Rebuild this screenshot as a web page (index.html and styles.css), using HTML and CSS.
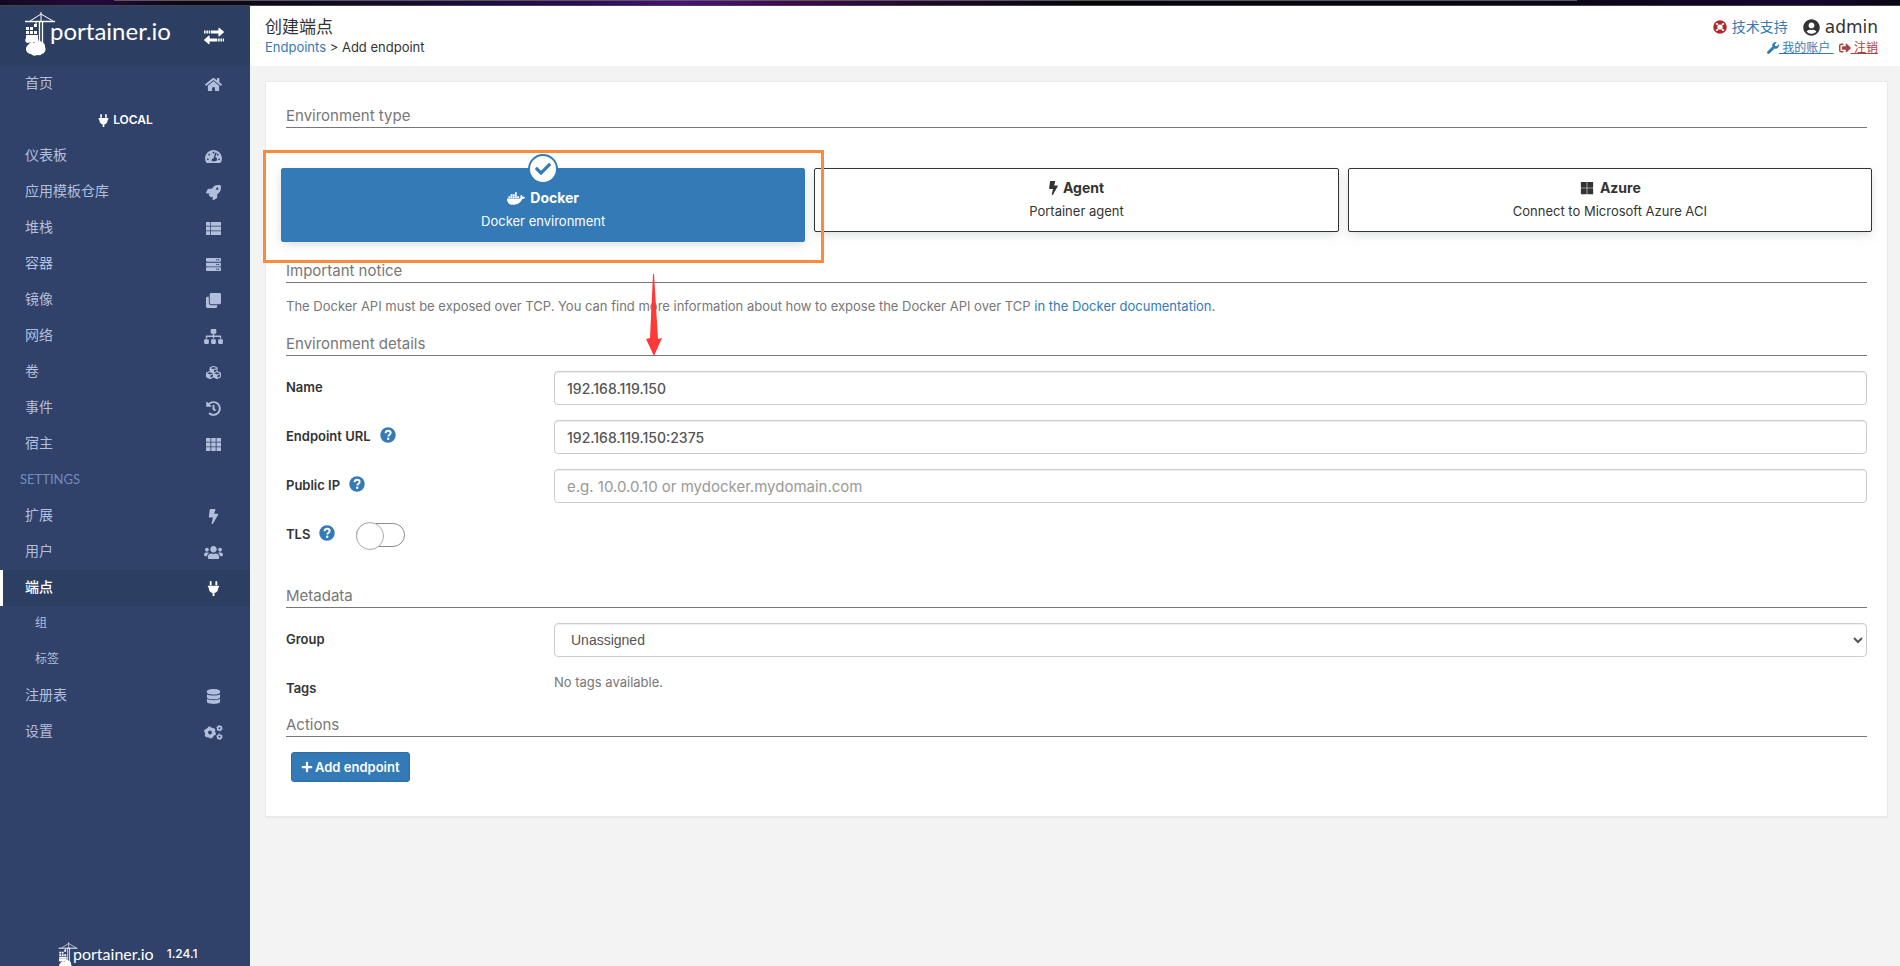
FILE: index.html
```html
<!DOCTYPE html>
<html lang="zh-CN">
<head>
<meta charset="utf-8">
<title>Portainer</title>
<link rel="stylesheet" href="styles.css">
</head>
<body>
<svg class="defs" aria-hidden="true">
  <symbol id="i-exchange" viewBox="0 0 512 512"><path d="M0 118h40v72H0zM60 118h40v72H60zM120 118h40v72h-40zM180 118h188V64c0-16 16-24 28-13l108 92c10 9 10 17 0 26l-108 92c-12 11-28 3-28-13v-58H180zM512 322h-30v72h30zM462 322h-40v72h40zM402 322h-40v72h40zM342 322H144v-58c0-16-16-24-28-13L8 343c-10 9-10 17 0 26l108 92c12 11 28 3 28-13v-54h198z"/></symbol>
  <symbol id="i-home" viewBox="0 0 576 512"><path d="M280.37 148.26L96 300.11V464a16 16 0 0 0 16 16l112.06-.29a16 16 0 0 0 15.92-16V368a16 16 0 0 1 16-16h64a16 16 0 0 1 16 16v95.64a16 16 0 0 0 16 16.05L464 480a16 16 0 0 0 16-16V300L295.67 148.26a12.19 12.19 0 0 0-15.3 0zM571.6 251.47L488 182.56V44.05a12 12 0 0 0-12-12h-56a12 12 0 0 0-12 12v72.61L318.47 43a48 48 0 0 0-61 0L4.34 251.47a12 12 0 0 0-1.6 16.9l25.5 31A12 12 0 0 0 45.15 301l235.22-193.74a12.19 12.19 0 0 1 15.3 0L530.9 301a12 12 0 0 0 16.9-1.6l25.5-31a12 12 0 0 0-1.7-16.93z"/></symbol>
  <symbol id="i-plug" viewBox="0 0 384 512"><path d="M256 144V32c0-17.673 14.327-32 32-32s32 14.327 32 32v112h-64zm112 16H16c-8.837 0-16 7.163-16 16v32c0 8.837 7.163 16 16 16h16v32c0 77.406 54.969 141.971 128 156.796V512h64v-99.204c73.031-14.825 128-79.39 128-156.796v-32h16c8.837 0 16-7.163 16-16v-32c0-8.837-7.163-16-16-16zm-240-16V32c0-17.673-14.327-32-32-32S64 14.327 64 32v112h64z"/></symbol>
  <symbol id="i-dash" viewBox="0 0 576 512"><path fill-rule="evenodd" d="M288 32C128.94 32 0 160.94 0 320c0 52.8 14.25 102.26 39.06 144.8 5.61 9.62 16.3 15.2 27.44 15.2h443c11.14 0 21.83-5.58 27.44-15.2C561.75 422.26 576 372.8 576 320c0-159.06-128.94-288-288-288zm0 64c17.67 0 32 14.33 32 32s-14.33 32-32 32-32-14.33-32-32 14.33-32 32-32zM96 384c-17.67 0-32-14.33-32-32s14.33-32 32-32 32 14.33 32 32-14.33 32-32 32zm48-160c-17.67 0-32-14.33-32-32s14.33-32 32-32 32 14.33 32 32-14.33 32-32 32zm202.77 61.33A63.84 63.84 0 0 1 343.44 416h-110.88A63.98 63.98 0 0 1 284.6 320l61.33-184a24 24 0 0 1 45.54 15.18zM432 160c17.67 0 32 14.33 32 32s-14.33 32-32 32-32-14.33-32-32 14.33-32 32-32zm48 224c-17.67 0-32-14.33-32-32s14.33-32 32-32 32 14.33 32 32-14.33 32-32 32z"/></symbol>
  <symbol id="i-rocket" viewBox="0 0 512 512"><path fill-rule="evenodd" d="M505.12 19.09c-1.19-5.53-6.66-11-12.21-12.18C460.7 0 435.5 0 410.4 0 307.2 0 245.3 55.2 199 128H94.9c-16.34 0-35.56 11.88-42.88 26.49L2.57 253.29A28.13 28.13 0 0 0 0 264a24 24 0 0 0 24 24h103.8l-22.47 22.47a32 32 0 0 0 0 45.25l50.9 50.91a32 32 0 0 0 45.26 0L224 384.16V488a24 24 0 0 0 24 24 28 28 0 0 0 10.7-2.55l98.72-49.39c14.63-7.3 26.5-26.5 26.5-42.86V312.8c72.59-46.3 128-108.4 128-211.1.1-25.2.1-50.4-6.8-82.61zM384 168a40 40 0 1 1 40-40 40 40 0 0 1-40 40z"/></symbol>
  <symbol id="i-list" viewBox="0 0 512 512"><path d="M0 32h145v132H0zM170 32h342v132H170zM0 190h145v132H0zM170 190h342v132H170zM0 348h145v132H0zM170 348h342v132H170z"/></symbol>
  <symbol id="i-server" viewBox="0 0 512 512"><path fill-rule="evenodd" d="M480 160H32c-17.67 0-32-14.33-32-32V64c0-17.67 14.33-32 32-32h448c17.67 0 32 14.33 32 32v64c0 17.67-14.33 32-32 32zm-48-88a24 24 0 1 0 0 48 24 24 0 0 0 0-48zm-64 0a24 24 0 1 0 0 48 24 24 0 0 0 0-48zm112 248H32c-17.67 0-32-14.33-32-32v-64c0-17.67 14.33-32 32-32h448c17.67 0 32 14.33 32 32v64c0 17.67-14.33 32-32 32zm-48-88a24 24 0 1 0 0 48 24 24 0 0 0 0-48zm-64 0a24 24 0 1 0 0 48 24 24 0 0 0 0-48zm112 248H32c-17.67 0-32-14.33-32-32v-64c0-17.67 14.33-32 32-32h448c17.67 0 32 14.33 32 32v64c0 17.67-14.33 32-32 32zm-48-88a24 24 0 1 0 0 48 24 24 0 0 0 0-48zm-64 0a24 24 0 1 0 0 48 24 24 0 0 0 0-48z"/></symbol>
  <symbol id="i-clone" viewBox="0 0 512 512"><path d="M464 0c26.51 0 48 21.49 48 48v288c0 26.51-21.49 48-48 48H176c-26.51 0-48-21.49-48-48V48c0-26.51 21.49-48 48-48h288M176 416c-44.112 0-80-35.888-80-80V128H48c-26.51 0-48 21.49-48 48v288c0 26.51 21.49 48 48 48h288c26.51 0 48-21.49 48-48v-48H176z"/></symbol>
  <symbol id="i-sitemap" viewBox="0 0 640 512"><path d="M128 352H32c-17.67 0-32 14.33-32 32v96c0 17.67 14.33 32 32 32h96c17.67 0 32-14.33 32-32v-96c0-17.67-14.33-32-32-32zm-24-80h192v48h48v-48h192v48h48v-57.59c0-21.17-17.23-38.41-38.41-38.41H344v-64h40c17.67 0 32-14.33 32-32V32c0-17.67-14.33-32-32-32H256c-17.67 0-32 14.33-32 32v96c0 17.67 14.33 32 32 32h40v64H94.41C73.23 224 56 241.23 56 262.41V320h48v-48zm264 80h-96c-17.67 0-32 14.33-32 32v96c0 17.67 14.33 32 32 32h96c17.67 0 32-14.33 32-32v-96c0-17.67-14.33-32-32-32zm240 0h-96c-17.67 0-32 14.33-32 32v96c0 17.67 14.33 32 32 32h96c17.67 0 32-14.33 32-32v-96c0-17.67-14.33-32-32-32z"/></symbol>
  <symbol id="i-cubes" viewBox="0 0 512 512"><path fill-rule="evenodd" d="M488.6 250.2L392 214V105.500c0-15-9.300-28.400-23.400-33.700l-100-37.500c-8.100-3.100-17.100-3.100-25.300 0l-100 37.500c-14.100 5.300-23.400 18.700-23.400 33.700V214l-96.600 36.200C9.300 255.500 0 268.900 0 283.900V394c0 13.600 7.700 26.100 19.900 32.200l100 50c10.100 5.100 22.100 5.100 32.200 0l103.900-52 103.900 52c10.100 5.100 22.100 5.100 32.200 0l100-50c12.200-6.100 19.900-18.600 19.900-32.200V283.900c0-15-9.300-28.400-23.400-33.700zM358 214.800l-85 31.900v-68.200l85-37v73.300zM154 104.100l102-38.200 102 38.200v.6l-102 41.400-102-41.400v-.6zm84 291.100l-85 42.500v-79.100l85-38.800v75.400zm0-112l-102 41.400-102-41.400v-.6l102-38.200 102 38.200v.6zm240 112l-85 42.500v-79.100l85-38.800v75.400zm0-112l-102 41.400-102-41.400v-.6l102-38.200 102 38.200v.6z"/></symbol>
  <symbol id="i-history" viewBox="0 0 512 512"><path d="M504 255.531c.253 136.640-111.180 248.372-247.820 248.468-59.015.042-113.223-20.530-155.822-54.911-11.077-8.940-11.905-25.541-1.839-35.607l11.267-11.267c8.609-8.609 22.353-9.551 31.891-1.984C173.062 425.135 212.781 440 256 440c101.705 0 184-82.311 184-184 0-101.705-82.311-184-184-184-48.814 0-93.149 18.969-126.068 49.932l50.754 50.754c10.080 10.080 2.941 27.314-11.313 27.314H24c-8.837 0-16-7.163-16-16V38.627c0-14.254 17.234-21.393 27.314-11.314l49.372 49.372C129.209 34.136 189.552 8 256 8c136.810 0 247.747 110.780 248 247.531zm-180.912 78.784l9.823-12.630c8.138-10.463 6.253-25.542-4.210-33.679L288 256.349V152c0-13.255-10.745-24-24-24h-16c-13.255 0-24 10.745-24 24v135.651l65.409 50.874c10.463 8.137 25.541 6.253 33.679-4.210z"/></symbol>
  <symbol id="i-th" viewBox="0 0 512 512"><path d="M0 32h152v134H0zM180 32h152v134H180zM360 32h152v134H360zM0 190h152v134H0zM180 190h152v134H180zM360 190h152v134H360zM0 348h152v132H0zM180 348h152v132H180zM360 348h152v132H360z"/></symbol>
  <symbol id="i-bolt" viewBox="0 0 320 512"><path d="M296 160H180.600l42.600-129.800C227.200 15 215.700 0 200 0H56C44 0 33.800 8.900 32.200 20.800l-32 240C-1.700 275.200 9.500 288 24 288h118.700L96.600 482.500c-3.600 15.200 8 29.500 23.300 29.500 8.400 0 16.400-4.400 20.800-12l176-304c9.300-15.900-2.200-36-20.700-36z"/></symbol>
  <symbol id="i-users" viewBox="0 0 640 512"><path d="M96 224c35.300 0 64-28.700 64-64s-28.700-64-64-64-64 28.700-64 64 28.700 64 64 64zm448 0c35.300 0 64-28.700 64-64s-28.700-64-64-64-64 28.700-64 64 28.700 64 64 64zm32 32h-64c-17.600 0-33.500 7.100-45.100 18.600 40.300 22.100 68.900 62 75.100 109.400h66c17.700 0 32-14.300 32-32v-32c0-35.300-28.700-64-64-64zm-256 0c61.900 0 112-50.100 112-112S381.900 32 320 32 208 82.100 208 144s50.100 112 112 112zm76.800 32h-8.300c-20.800 10-43.900 16-68.500 16s-47.600-6-68.500-16h-8.300C179.600 288 128 339.600 128 403.200V432c0 26.500 21.500 48 48 48h288c26.500 0 48-21.500 48-48v-28.800c0-63.600-51.600-115.200-115.200-115.200zm-223.700-13.400C161.500 263.100 145.600 256 128 256H64c-35.300 0-64 28.700-64 64v32c0 17.700 14.300 32 32 32h65.900c6.300-47.400 34.900-87.300 75.200-109.400z"/></symbol>
  <symbol id="i-db" viewBox="0 0 448 512"><path d="M448 73.143v45.714C448 159.143 347.667 192 224 192S0 159.143 0 118.857V73.143C0 32.857 100.333 0 224 0s224 32.857 224 73.143zM448 176v102.857C448 319.143 347.667 352 224 352S0 319.143 0 278.857V176c48.125 33.143 136.208 48.572 224 48.572S399.874 209.143 448 176zm0 160v102.857C448 479.143 347.667 512 224 512S0 479.143 0 438.857V336c48.125 33.143 136.208 48.572 224 48.572S399.874 369.143 448 336z"/></symbol>
  <symbol id="i-cogs" viewBox="0 0 640 512"><g fill="none" stroke="currentColor"><circle cx="200" cy="256" r="122" stroke-width="110"/><circle cx="200" cy="256" r="180" stroke-width="50" stroke-dasharray="94 94.500"/><circle cx="525" cy="110" r="62" stroke-width="54"/><circle cx="525" cy="110" r="94" stroke-width="30" stroke-dasharray="49 49.400"/><circle cx="525" cy="402" r="62" stroke-width="54"/><circle cx="525" cy="402" r="94" stroke-width="30" stroke-dasharray="49 49.400"/></g></symbol>
  <symbol id="i-ring" viewBox="0 0 512 512"><circle cx="256" cy="256" r="172" fill="none" stroke="currentColor" stroke-width="152"/><g fill="none" stroke="#fff"><path d="M120 120L180 180M332 180l60-60M120 392l60-60M332 332l60 60" stroke-width="66"/></g></symbol>
  <symbol id="i-user" viewBox="0 0 496 512"><path d="M248 8C111 8 0 119 0 256s111 248 248 248 248-111 248-248S385 8 248 8zm0 96c48.600 0 88 39.400 88 88s-39.400 88-88 88-88-39.400-88-88 39.400-88 88-88zm0 344c-58.700 0-111.300-26.600-146.500-68.200 18.800-35.400 55.600-59.800 98.500-59.800 2.400 0 4.800.4 7.100 1.100 13 4.200 26.600 6.900 40.900 6.900 14.300 0 28-2.700 40.900-6.900 2.300-.7 4.700-1.100 7.100-1.100 42.900 0 79.700 24.400 98.500 59.800C359.300 421.400 306.700 448 248 448z"/></symbol>
  <symbol id="i-wrench" viewBox="0 0 512 512"><path d="M507.730 109.100c-2.240-9.030-13.540-12.090-20.120-5.510l-74.360 74.360-67.880-11.310-11.310-67.880 74.360-74.360c6.620-6.620 3.430-17.900-5.660-20.160-47.380-11.740-99.550.91-136.580 37.930-39.640 39.640-50.550 97.100-34.050 147.200L18.740 402.760c-24.990 24.990-24.990 65.510 0 90.500 24.990 24.990 65.510 24.990 90.500 0l213.210-213.210c50.120 16.710 107.470 5.680 147.370-34.220 37.070-37.070 49.700-89.320 37.910-136.730z"/></symbol>
  <symbol id="i-out" viewBox="0 0 512 512"><path d="M497 273L329 441c-15 15-41 4.500-41-17v-96H152c-13.300 0-24-10.700-24-24v-96c0-13.300 10.700-24 24-24h136V88c0-21.400 25.900-32 41-17l168 168c9.300 9.400 9.300 24.600 0 34zM192 436v-40c0-6.600-5.400-12-12-12H96c-17.700 0-32-14.300-32-32V160c0-17.700 14.300-32 32-32h84c6.600 0 12-5.400 12-12V76c0-6.600-5.400-12-12-12H96c-53 0-96 43-96 96v192c0 53 43 96 96 96h84c6.600 0 12-5.400 12-12z"/></symbol>
  <symbol id="i-help" viewBox="0 0 512 512"><circle cx="256" cy="256" r="248"/><path d="M176 200c6-55 38-80 82-80 48 0 82 28 82 68 0 58-74 56-74 112" fill="none" stroke="#fff" stroke-width="62"/><circle cx="262" cy="376" r="40" fill="#fff"/></symbol>
  <symbol id="i-check" viewBox="0 0 512 512"><path d="M173.898 439.404l-166.400-166.400c-9.997-9.997-9.997-26.206 0-36.204l36.203-36.204c9.997-9.998 26.207-9.998 36.204 0L192 312.690 432.095 72.596c9.997-9.997 26.207-9.997 36.204 0l36.203 36.204c9.997 9.997 9.997 26.206 0 36.204l-294.400 294.401c-9.998 9.997-26.207 9.997-36.204-.001z"/></symbol>
  <symbol id="i-docker" viewBox="0 0 640 512"><path d="M349.900 236.300h-66.100v-59.400h66.100v59.400zm0-204.300h-66.100v60.700h66.100V32zm78.200 144.800H362v59.400h66.100v-59.400zm-156.300-72.100h-66.100v60.100h66.100v-60.100zm78.100 0h-66.100v60.100h66.100v-60.100zm276.800 100c-14.400-9.700-47.600-13.200-73.100-8.400-3.300-24-16.700-44.900-41.100-63.700l-14-9.300-9.300 14c-18.400 27.800-23.400 73.600-3.700 103.800-8.700 4.700-25.800 11.100-48.400 10.700H2.400c-8.700 50.800 5.800 116.800 44 162.100 37.100 43.900 92.700 66.200 165.400 66.200 157.400 0 273.900-72.500 328.400-204.200 21.400.4 67.600.1 91.300-45.200 1.500-2.500 6.600-13.200 8.500-17.100l-13.300-8.900zm-511.100-27.900h-66v59.400h66.100v-59.400zm78.100 0h-66.100v59.400h66.100v-59.400zm78.100 0h-66.100v59.400h66.100v-59.400zm-78.100-72.100h-66.100v60.100h66.100v-60.100z"/></symbol>
  <symbol id="i-win" viewBox="0 0 448 512"><path d="M0 32h214v214H0zM234 32h214v214H234zM0 266h214v214H0zM234 266h214v214H234z"/></symbol>
  <symbol id="i-plus" viewBox="0 0 448 512"><path d="M416 208H272V64c0-17.670-14.330-32-32-32h-32c-17.670 0-32 14.330-32 32v144H32c-17.670 0-32 14.330-32 32v32c0 17.670 14.330 32 32 32h144v144c0 17.670 14.330 32 32 32h32c17.670 0 32-14.330 32-32V304h144c17.670 0 32-14.330 32-32v-32c0-17.670-14.330-32-32-32z"/></symbol>
  <symbol id="i-crane" viewBox="0 0 32 44"><g fill="none" stroke="currentColor"><path d="M1 9.500h30" stroke-width="1.500"/><path d="M6 9L17 2l12 7M17 0v10M12 10v4" stroke-width="1"/><path d="M15.500 9v22M18.500 9v22" stroke-width="1.300"/></g><path d="M10 12h3v3h-3zM2 15h3v3H2zM6 15h3v3H6zM2 19h3v3H2zM6 19h3v3H6zM10 19h3v3h-3zM2 23h12v3H2z"/><path d="M3 31q-3-2-1-5h12v4q-4-1-5 1-4-1-6 0z"/><path d="M7 42a5 5 0 0 1-3-9 5 5 0 0 1 6-2 5 5 0 0 1 8-1 5 5 0 0 1 3 5 5 5 0 0 1-3 7 5 5 0 0 1-5 1 5 5 0 0 1-6-1z"/></symbol>
</svg>

<div class="strip"></div>
<div class="app">
  <nav class="sidebar">
    <header class="brand">
      <a class="logo" href="#"><svg class="crane"><use href="#i-crane"/></svg><span>portainer.io</span></a>
      <button class="toggle" aria-label="Toggle sidebar"><svg class="ic"><use href="#i-exchange"/></svg></button>
    </header>
    <ul class="menu">
      <li><a href="#"><span>首页</span><svg class="ic"><use href="#i-home"/></svg></a></li>
      <li class="env"><svg class="ic small"><use href="#i-plug"/></svg>LOCAL</li>
      <li><a href="#"><span>仪表板</span><svg class="ic"><use href="#i-dash"/></svg></a></li>
      <li><a href="#"><span>应用模板仓库</span><svg class="ic"><use href="#i-rocket"/></svg></a></li>
      <li><a href="#"><span>堆栈</span><svg class="ic"><use href="#i-list"/></svg></a></li>
      <li><a href="#"><span>容器</span><svg class="ic"><use href="#i-server"/></svg></a></li>
      <li><a href="#"><span>镜像</span><svg class="ic"><use href="#i-clone"/></svg></a></li>
      <li><a href="#"><span>网络</span><svg class="ic"><use href="#i-sitemap"/></svg></a></li>
      <li><a href="#"><span>卷</span><svg class="ic"><use href="#i-cubes"/></svg></a></li>
      <li><a href="#"><span>事件</span><svg class="ic"><use href="#i-history"/></svg></a></li>
      <li><a href="#"><span>宿主</span><svg class="ic"><use href="#i-th"/></svg></a></li>
      <li class="heading">SETTINGS</li>
      <li><a href="#"><span>扩展</span><svg class="ic"><use href="#i-bolt"/></svg></a></li>
      <li><a href="#"><span>用户</span><svg class="ic"><use href="#i-users"/></svg></a></li>
      <li><a class="active" href="#"><span>端点</span><svg class="ic"><use href="#i-plug"/></svg></a></li>
      <li><a class="sub" href="#"><span>组</span></a></li>
      <li><a class="sub" href="#"><span>标签</span></a></li>
      <li><a href="#"><span>注册表</span><svg class="ic"><use href="#i-db"/></svg></a></li>
      <li><a href="#"><span>设置</span><svg class="ic"><use href="#i-cogs"/></svg></a></li>
    </ul>
    <footer class="foot"><span class="logo mini"><svg class="crane"><use href="#i-crane"/></svg><span>portainer.io</span></span><span class="version">1.24.1</span></footer>
  </nav>

  <div class="page">
    <header class="topbar">
      <div>
        <h1>创建端点</h1>
        <p class="crumbs"><a href="#">Endpoints</a> &gt; Add endpoint</p>
      </div>
      <div class="account">
        <div class="who"><a class="support" href="#"><svg class="ic"><use href="#i-ring"/></svg>技术支持</a><span class="user"><svg class="ic"><use href="#i-user"/></svg>admin</span></div>
        <div class="links"><a href="#"><svg class="ic"><use href="#i-wrench"/></svg><u>&nbsp;我的账户&nbsp;</u></a><a class="logout" href="#"><svg class="ic"><use href="#i-out"/></svg><u>&nbsp;注销</u></a></div>
      </div>
    </header>

    <main class="panel">
      <form>
        <h2>Environment type</h2>
        <div class="types">
          <button type="button" class="type selected"><span class="tick"><svg class="ic"><use href="#i-check"/></svg></span><b><svg class="ic wide"><use href="#i-docker"/></svg>Docker</b><span>Docker environment</span></button>
          <button type="button" class="type"><b><svg class="ic thin"><use href="#i-bolt"/></svg>Agent</b><span>Portainer agent</span></button>
          <button type="button" class="type"><b><svg class="ic"><use href="#i-win"/></svg>Azure</b><span>Connect to Microsoft Azure ACI</span></button>
          <div class="callout"></div>
        </div>
        <h2>Important notice</h2>
        <p class="notice">The Docker API must be exposed over TCP. You can find more information about how to expose the Docker API over TCP <a href="#">in the Docker documentation</a>.
          <svg class="arrow" viewBox="0 0 16 82"><path d="M7 0h1l4 65 4-1-8 18L0 65l4-1z" fill="#ff3838"/></svg></p>
        <h2>Environment details</h2>
        <div class="rows">
          <div class="row"><label for="name">Name</label><input id="name" type="text" value="192.168.119.150"></div>
          <div class="row"><label for="url">Endpoint URL<svg class="help"><use href="#i-help"/></svg></label><input id="url" type="text" value="192.168.119.150:2375"></div>
          <div class="row"><label for="ip">Public IP<svg class="help"><use href="#i-help"/></svg></label><input id="ip" type="text" placeholder="e.g. 10.0.0.10 or mydocker.mydomain.com"></div>
          <div class="row tls"><label for="tls">TLS<svg class="help"><use href="#i-help"/></svg></label><input id="tls" class="switch" type="checkbox"></div>
        </div>
        <h2 class="meta">Metadata</h2>
        <div class="rows">
          <div class="row"><label for="group">Group</label><select id="group"><option>Unassigned</option></select></div>
          <div class="row"><span class="label">Tags</span><span class="muted">No tags available.</span></div>
        </div>
        <h2>Actions</h2>
        <button type="button" class="add"><svg class="ic"><use href="#i-plus"/></svg>Add endpoint</button>
      </form>
    </main>
  </div>
</div>
</body>
</html>
```
FILE: styles.css
```css
* { box-sizing: border-box; }
body {
  margin: 0;
  height: 100vh;
  display: flex;
  flex-direction: column;
  overflow: hidden;
  background: #f3f3f3;
  color: #333;
  font: 13px/20px Inter, "Noto Sans CJK SC", sans-serif;
}
a { color: #337ab7; text-decoration: none; }
button, input, select { font: inherit; }
h1, h2, p, ul { margin: 0; padding: 0; font-weight: 400; }
.defs { position: absolute; width: 0; height: 0; }
.ic { width: 16px; height: 14px; fill: currentColor; flex: none; }

.strip {
  flex: none;
  height: 6px;
  border-bottom: 1px solid #44424a;
  background:
    linear-gradient(90deg, transparent 6%, #5a585f 6%, #5a585f 83%, transparent 83%) top / 100% 1px no-repeat,
    linear-gradient(90deg, #120a20, #240a3c 5%, #0a0612 10%, #170b30 22%, #2b0b55 30%, #4a1080 36%, #3d0a4a 42%, #1d0726 50%, #050608 57%, #0a0614 80%, #14062e 95%, #0a0614);
}
.app { flex: 1; min-height: 0; display: flex; }

/* Sidebar */
.sidebar {
  width: 250px;
  flex: none;
  display: flex;
  flex-direction: column;
  overflow: hidden;
  background: #30426a;
  color: #b2bfdc;
}
.brand {
  flex: none;
  height: 60px;
  display: flex;
  justify-content: space-between;
  align-items: center;
  padding: 0 26px 4px 24px;
  background: #2d3e63;
}
.logo { display: flex; align-items: flex-start; color: #fff; font: 24px/38px Lato, sans-serif; }
.crane { width: 32px; height: 44px; fill: currentColor; flex: none; margin-right: -6px; }
.toggle { padding: 4px 0 0; border: 0; background: none; color: #fff; display: flex; }
.toggle .ic { width: 20px; height: 20px; }
.menu { flex: 1; list-style: none; }
.menu li { height: 36px; font-size: 14px; }
.menu a {
  height: 36px;
  display: flex;
  align-items: center;
  justify-content: space-between;
  padding: 0 27px 0 25px;
  color: inherit;
}
.menu a span { padding-bottom: 2px; }
.menu .ic { width: 19px; height: 15px; }
.menu .env {
  display: flex;
  align-items: center;
  justify-content: center;
  gap: 3px;
  color: #fff;
  font: 600 12px/36px Inter, sans-serif;
}
.menu .env .small { width: 13px; height: 13px; }
.menu .heading { padding-left: 20px; color: #738bc0; font: 13px/34px Lato, sans-serif; }
.menu .active { border-left: 3px solid #fff; padding-left: 22px; background: #2d3e63; color: #fff; font-weight: 500; }
.menu .sub { padding-left: 35px; font-size: 12px; }
.foot { flex: none; height: 24px; display: flex; align-items: flex-start; padding-left: 58px; gap: 13px; color: #fff; font-weight: 500; font-size: 12px; line-height: 24px; }
.mini { font-size: 16px; line-height: 24px; }
.mini .crane { width: 20px; height: 28px; margin-right: -5px; }

/* Page header */
.page { flex: 1; min-width: 0; overflow: auto; }
.topbar { height: 60px; padding: 10px 22px 0 15px; display: flex; justify-content: space-between; background: #fff; }
h1 { font-size: 17px; line-height: 22px; }
.crumbs { line-height: 19px; }
.account { display: flex; flex-direction: column; align-items: flex-end; }
.who { display: flex; align-items: center; gap: 15px; line-height: 22px; }
.support { display: flex; align-items: center; gap: 5px; font-size: 14px; }
.support .ic { width: 14px; color: #b02a2a; }
.user { display: flex; align-items: center; gap: 5px; font: 17px/22px "DejaVu Sans", sans-serif; }
.user .ic { width: 17px; height: 17px; }
.links { display: flex; gap: 5px; font-size: 12px; line-height: 20px; }
.links a { display: flex; align-items: center; }
.links .ic { width: 12px; height: 12px; }
.links .logout { color: #a94442; }

/* Panel */
.panel {
  margin: 15px 12px 15px 15px;
  padding: 24px 20px 34px;
  background: #fff;
  border: 1px solid #e9e9e9;
  border-bottom-width: 2px;
}
h2 {
  font-size: 15px;
  line-height: 20px;
  padding-bottom: 1px;
  border-bottom: 1px solid #777;
  color: #777;
}
.types { position: relative; display: flex; align-items: flex-start; gap: 9px; height: 74px; margin: 40px -5px 19px; }
.type {
  position: relative;
  flex: 1;
  height: 64px;
  display: flex;
  flex-direction: column;
  align-items: center;
  padding: 9px 0 0;
  border: 1px solid #333;
  border-radius: 2px;
  background: #fff;
  color: #333;
  box-shadow: 0 3px 10px -2px rgba(161, 170, 166, 0.5);
}
.type b { display: flex; align-items: center; gap: 5px; font-size: 14px; font-weight: 700; line-height: 20px; }
.type > span:last-child { line-height: 26px; }
.type .wide { width: 18px; height: 15px; }
.type .thin { width: 9px; height: 14px; }
.selected { height: 74px; padding-top: 19px; border-color: #337ab7; background: #337ab7; color: #fff; }
.tick {
  position: absolute;
  top: -15px;
  left: calc(50% - 15px);
  width: 30px;
  height: 30px;
  display: flex;
  align-items: center;
  justify-content: center;
  border: 2px solid #337ab7;
  border-radius: 50%;
  background: #fff;
  color: #337ab7;
}
.tick .ic { height: 16px; }
.callout {
  position: absolute;
  top: -18px;
  left: -18px;
  width: calc(33% + 36px);
  height: 113px;
  border: 3px solid #fb8a3a;
}
.notice { position: relative; margin: 13px 0 18px; color: #777; }
.arrow { position: absolute; left: 360px; top: -22px; width: 16px; height: 82px; }

.rows { display: flex; flex-direction: column; gap: 15px; margin: 15px 0 9px; }
.row { display: flex; min-height: 34px; }
label, .label { width: 268px; flex: none; padding-top: 6px; font-weight: 600; display: flex; align-items: flex-start; }
.help { width: 16px; height: 16px; margin: 1px 0 0 9px; fill: #337ab7; }
input[type="text"], select {
  flex: 1;
  min-width: 0;
  height: 34px;
  padding: 0 12px;
  border: 1px solid #ccc;
  border-radius: 4px;
  background: #fff;
  color: #555;
  font-size: 14px;
  font-weight: 500;
  box-shadow: inset 0 1px 1px rgba(0, 0, 0, 0.075);
}
input[type="text"]:placeholder-shown { font-size: 15px; font-weight: 400; }
input::placeholder { color: #999; }
select { font: 14px "Liberation Sans", sans-serif; }
.tls label { width: auto; padding-right: 21px; }
.switch {
  appearance: none;
  width: 49px;
  height: 24px;
  margin: 5px 0;
  border: 1px solid #8c8c8c;
  border-radius: 12px;
  background: #fff;
}
.switch::before {
  content: "";
  display: block;
  width: 26px;
  height: 26px;
  margin: -2px 0 0 -1px;
  border: 1px solid #aaa;
  border-radius: 50%;
  background: #fff;
}
.meta { margin-top: 34px; }
.muted { color: #777; }
.add {
  display: flex;
  align-items: center;
  gap: 2px;
  height: 30px;
  margin: 15px 0 0 5px;
  padding: 0 9px;
  border: 1px solid #2e6da4;
  border-radius: 3px;
  background: #337ab7;
  color: #fff;
  font-weight: 600;
}
.add .ic { width: 12px; height: 12px; }
```
